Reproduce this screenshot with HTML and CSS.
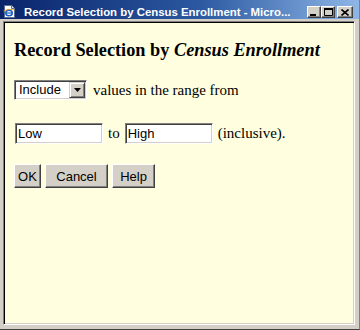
FILE: index.html
```html
<!DOCTYPE html>
<html lang="en">
<head>
  <meta charset="UTF-8" />
  <title>Record Selection by Census Enrollment</title>
  <link rel="stylesheet" href="styles.css">
</head>
<body>
  <div class="window">
    <div class="titlebar">
      <svg class="app-icon" width="13" height="13" viewBox="0 0 13 13">
        <path d="M1.5 0.5h7l3 3v9h-10z" fill="#fff" stroke="#5a6f90"/>
        <path d="M8.5 0.5v3h3" fill="#dfe6f0" stroke="#5a6f90"/>
        <ellipse cx="6" cy="8" rx="3.2" ry="2.8" fill="none" stroke="#1c5fc8" stroke-width="1.6"/>
        <path d="M3 8h6" stroke="#1c5fc8" stroke-width="1.2"/>
        <path d="M0.5 6 Q6 3 11.5 5" fill="none" stroke="#e0a020" stroke-width="0.9"/>
      </svg>
      <span class="title">Record Selection by Census Enrollment - Micro...</span>
      <div class="caption-btns">
        <span class="cap-btn"><svg width="8" height="7" viewBox="0 0 8 7"><rect x="0" y="5" width="6" height="2" fill="#000"/></svg></span>
        <span class="cap-btn"><svg width="9" height="8" viewBox="0 0 9 8"><path d="M0.5 0.5h8v7h-8z" fill="none" stroke="#000"/><rect x="0" y="0" width="9" height="2" fill="#000"/></svg></span>
        <span class="cap-btn close"><svg width="8" height="7" viewBox="0 0 8 7"><path d="M0.5 0.5l7 6M7.5 0.5l-7 6" stroke="#000" stroke-width="1.6"/></svg></span>
      </div>
    </div>

    <div class="client">
      <h1>Record Selection by <i>Census Enrollment</i></h1>

      <div class="row row-mode">
        <div class="select">
          <span class="select-value">Include</span>
          <span class="select-arrow"><svg width="7" height="4" viewBox="0 0 7 4"><path d="M0 0h7l-3.5 4z" fill="#000"/></svg></span>
        </div>
        <span class="label">values in the range from</span>
      </div>

      <div class="row row-range">
        <input class="field" type="text" value="Low">
        <span class="label">to</span>
        <input class="field" type="text" value="High">
        <span class="label">(inclusive).</span>
      </div>

      <div class="row row-buttons">
        <button class="btn btn-ok">OK</button>
        <button class="btn btn-cancel">Cancel</button>
        <button class="btn btn-help">Help</button>
      </div>
    </div>
  </div>
</body>
</html>
```

FILE: styles.css
```css
body {
  margin: 0;
  padding: 0;
  background: #d4d0c8;
}

.window {
  width: 360px;
  height: 330px;
  box-sizing: border-box;
  display: flex;
  flex-direction: column;
  background: #d4d0c8;
  border-right: 1px solid #808080;
  border-bottom: 1px solid #404040;
}

.titlebar {
  height: 19px;
  flex: none;
  display: flex;
  align-items: flex-end;
  padding: 0 0 1px 3px;
  box-sizing: border-box;
  background: linear-gradient(to right, #0a246a 0%, #2a58a0 55%, #8eb6e6 100%);
  color: #fff;
}

.app-icon {
  flex: none;
  margin-right: 8px;
}

.title {
  flex: 1;
  min-width: 0;
  overflow: hidden;
  font-family: "Liberation Sans", Arial, sans-serif;
  font-weight: bold;
  font-size: 11.4px;
  line-height: 12px;
  white-space: nowrap;
}

.caption-btns {
  flex: none;
  margin-right: 6px;
  display: flex;
}

.cap-btn {
  width: 14px;
  height: 12px;
  box-sizing: border-box;
  background: #d4d0c8;
  border: 1px solid;
  border-color: #fff #404040 #404040 #fff;
  box-shadow: inset -1px -1px #808080;
  display: flex;
  align-items: center;
  justify-content: center;
}

.cap-btn.close {
  width: 16px;
  margin-left: 2px;
}

.client {
  flex: 1;
  margin: 2px 4px 4px 3px;
  padding: 17px 10px 0;
  background: #ffffe0;
  border: 1px solid;
  border-color: #808080 #fff #fff #808080;
  box-shadow: inset 1px 1px #000, inset -1px -1px #d4d0c8;
}

h1 {
  margin: 0;
  font-family: "Liberation Serif", serif;
  font-size: 18.3px;
  line-height: 22px;
  font-weight: bold;
  color: #000;
}

.row {
  display: flex;
  align-items: center;
  font-family: "Liberation Serif", serif;
  font-size: 15px;
  color: #000;
}

.row-mode {
  margin-top: 19px;
}

.row-range {
  margin-top: 23px;
}

.row-buttons {
  margin-top: 20px;
  gap: 4px;
}

.label {
  margin-left: 5px;
}

.row-mode .label {
  margin-left: 6px;
}

.row-range .label + .field {
  margin-left: 5px;
}

.select {
  width: 73px;
  height: 20px;
  box-sizing: border-box;
  display: flex;
  align-items: stretch;
  background: #fff;
  border: 1px solid;
  border-color: #808080 #fff #fff #808080;
  box-shadow: inset 1px 1px #404040, inset -1px -1px #d4d0c8;
  padding: 1px;
}

.select-value {
  flex: 1;
  font-family: "Liberation Sans", Arial, sans-serif;
  font-size: 13px;
  line-height: 16px;
  padding-left: 3px;
}

.select-arrow {
  width: 16px;
  box-sizing: border-box;
  background: #d4d0c8;
  border: 1px solid;
  border-color: #d4d0c8 #404040 #404040 #d4d0c8;
  box-shadow: inset 1px 1px #fff, inset -1px -1px #808080;
  display: flex;
  align-items: center;
  justify-content: center;
}

.field {
  width: 88px;
  height: 21px;
  box-sizing: border-box;
  margin: 0;
  padding: 0 2px;
  background: #fff;
  border: 1px solid;
  border-color: #808080 #fff #fff #808080;
  box-shadow: inset 1px 1px #404040, inset -1px -1px #d4d0c8;
  font-family: "Liberation Sans", Arial, sans-serif;
  font-size: 13px;
  color: #000;
  outline: none;
}

.row-range .field:first-child {
  margin-left: 1px;
}

.btn {
  height: 24px;
  box-sizing: border-box;
  margin: 0;
  padding: 0 6px;
  background: #d4d0c8;
  border: 1px solid;
  border-color: #fff #404040 #404040 #fff;
  box-shadow: inset -1px -1px #808080;
  font-family: "Liberation Sans", Arial, sans-serif;
  font-size: 13px;
  color: #000;
  cursor: pointer;
}

.btn-ok {
  width: 27px;
  padding: 0;
}

.btn-cancel {
  width: 63px;
}

.btn-help {
  width: 43px;
}
```
